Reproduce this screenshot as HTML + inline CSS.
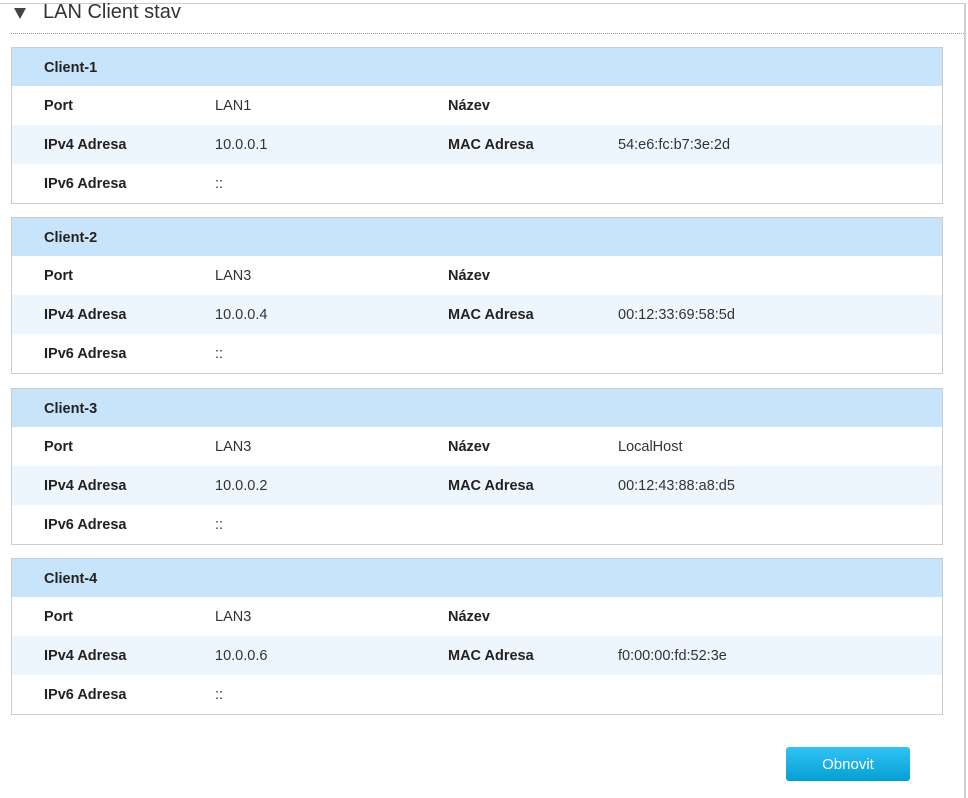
<!DOCTYPE html><html><head><meta charset="utf-8"><style>
body{margin:0;width:968px;height:798px;background:#fff;font-family:"Liberation Sans",sans-serif;position:relative;overflow:hidden;color:#333}
.top{position:absolute;left:0;top:3px;width:965px;height:1px;background:#ccc}
.right{position:absolute;left:964px;top:3px;width:2px;height:795px;background:#d0d0d0}
.title{position:absolute;left:43px;top:0px;font-size:20px;line-height:24px;color:#333}
.tri{position:absolute;left:14px;top:8px;width:0;height:0;border-left:6px solid transparent;border-right:6px solid transparent;border-top:11px solid #444}
.dot{position:absolute;left:11px;top:33px;width:953px;border-top:1px dotted #999}
.card{position:absolute;left:11px;width:930px;border:1px solid #ccc;font-size:14.5px}
.h{height:38px;background:#c8e4fa;font-weight:bold;line-height:40px;padding-left:32px;color:#222}
.r{height:39px;line-height:41px;position:relative}
.r.a{background:#eef6fd}
.r span{position:absolute}
.l{font-weight:bold;color:#222}
.btn{position:absolute;left:786px;top:747px;width:124px;height:34px;border-radius:3px;background:linear-gradient(#33c3f5,#059fd2);color:#fff;font-size:15px;text-align:center;line-height:36px}
</style></head><body>
<div class="top"></div><div class="right"></div>
<div class="tri"></div><div class="title">LAN Client stav</div>
<div class="dot"></div>
<div class="card" style="top:47px"><div class="h">Client-1</div>
<div class="r"><span class="l" style="left:32px">Port</span><span style="left:203px">LAN1</span><span class="l" style="left:436px">Název</span></div>
<div class="r a"><span class="l" style="left:32px">IPv4 Adresa</span><span style="left:203px">10.0.0.1</span><span class="l" style="left:436px">MAC Adresa</span><span style="left:606px">54:e6:fc:b7:3e:2d</span></div>
<div class="r"><span class="l" style="left:32px">IPv6 Adresa</span><span style="left:203px">::</span></div></div>
<div class="card" style="top:217px"><div class="h">Client-2</div>
<div class="r"><span class="l" style="left:32px">Port</span><span style="left:203px">LAN3</span><span class="l" style="left:436px">Název</span></div>
<div class="r a"><span class="l" style="left:32px">IPv4 Adresa</span><span style="left:203px">10.0.0.4</span><span class="l" style="left:436px">MAC Adresa</span><span style="left:606px">00:12:33:69:58:5d</span></div>
<div class="r"><span class="l" style="left:32px">IPv6 Adresa</span><span style="left:203px">::</span></div></div>
<div class="card" style="top:388px"><div class="h">Client-3</div>
<div class="r"><span class="l" style="left:32px">Port</span><span style="left:203px">LAN3</span><span class="l" style="left:436px">Název</span><span style="left:606px">LocalHost</span></div>
<div class="r a"><span class="l" style="left:32px">IPv4 Adresa</span><span style="left:203px">10.0.0.2</span><span class="l" style="left:436px">MAC Adresa</span><span style="left:606px">00:12:43:88:a8:d5</span></div>
<div class="r"><span class="l" style="left:32px">IPv6 Adresa</span><span style="left:203px">::</span></div></div>
<div class="card" style="top:558px"><div class="h">Client-4</div>
<div class="r"><span class="l" style="left:32px">Port</span><span style="left:203px">LAN3</span><span class="l" style="left:436px">Název</span></div>
<div class="r a"><span class="l" style="left:32px">IPv4 Adresa</span><span style="left:203px">10.0.0.6</span><span class="l" style="left:436px">MAC Adresa</span><span style="left:606px">f0:00:00:fd:52:3e</span></div>
<div class="r"><span class="l" style="left:32px">IPv6 Adresa</span><span style="left:203px">::</span></div></div>
<div class="btn">Obnovit</div>
</body></html>
